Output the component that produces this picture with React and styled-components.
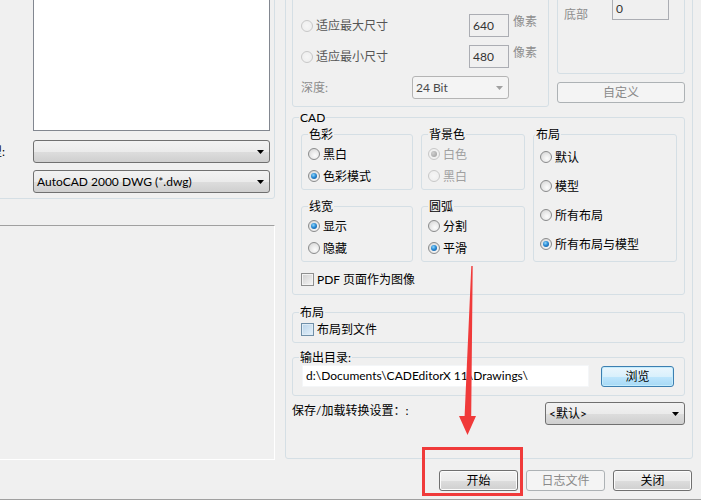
import React from 'react';
import styled, { createGlobalStyle } from 'styled-components';

const FONT = `Lato, "Noto Sans CJK SC", sans-serif`;

const GlobalStyle = createGlobalStyle`
  html, body { margin: 0; padding: 0; background: #f0f0f0; }
  body { font-family: ${FONT}; font-size: 12px; color: #000; }
  * { box-sizing: border-box; }
`;

const Window = styled.div`
  position: relative;
  width: 701px;
  height: 500px;
  overflow: hidden;
  background: #f0f0f0;
  border-bottom: 1px solid #a0a0a0;
  display: flex;
  flex-direction: column;
  font-family: ${FONT};
  font-size: 12px;
  line-height: 15px;
`;

const Main = styled.div`
  display: flex;
  align-items: flex-start;
  gap: 10px;
  height: 460px;
  flex: none;
`;

/* ---------- left side ---------- */
const LeftPane = styled.div`
  width: 285px;
  margin-left: -10px;
  display: flex;
  flex-direction: column;
  flex: none;
`;

const LeftGroup = styled.div`
  margin-top: -50px;
  height: 249px;
  border: 1px solid #d5dfe5;
  border-radius: 3px;
  display: flex;
  flex-direction: column;
  justify-content: flex-end;
  padding-bottom: 5px;
`;

const Listbox = styled.div`
  flex: 1;
  width: 237px;
  margin: 0 0 9px 42px;
  background: #fff;
  border: 1px solid #828790;
`;

const FieldRow = styled.div`
  display: flex;
  align-items: center;
  height: 23px;
  margin-top: ${p => p.$gap || 0}px;
`;

const FieldLabel = styled.div`
  width: 42px;
  flex: none;
  overflow: hidden;
  display: flex;
  justify-content: flex-end;
  padding-right: 28px;
  white-space: nowrap;
`;

const SunkenPanel = styled.div`
  margin-top: 26px;
  height: 235px;
  border-top: 1px solid #a0a0a0;
  border-left: 1px solid #a0a0a0;
  border-right: 1px solid #ffffff;
  border-bottom: 1px solid #ffffff;
`;

/* ---------- controls ---------- */
const ComboBox = styled.div`
  width: ${p => p.$w}px;
  height: 23px;
  flex: none;
  display: flex;
  align-items: center;
  justify-content: space-between;
  padding: 0 5px 0 3px;
  border-radius: 3px;
  border: 1px solid ${p => (p.$disabled ? '#b4b4b4' : '#707070')};
  background: ${p =>
    p.$disabled
      ? '#f4f4f4'
      : 'linear-gradient(to bottom, #f2f2f2 0%, #ebebeb 50%, #dddddd 51%, #cfcfcf 100%)'};
  color: ${p => (p.$disabled ? '#4a4a4a' : '#000')};
  white-space: nowrap;
`;

const Arrow = ({ disabled }) => (
  <svg width="7" height="4" viewBox="0 0 7 4" style={{ flex: 'none', marginTop: 1 }}>
    <polygon points="0,0 7,0 3.5,4" fill={disabled ? '#a0a0a0' : '#000'} />
  </svg>
);

const Combo = ({ w, disabled, children }) => (
  <ComboBox $w={w} $disabled={disabled}>
    <span>{children}</span>
    <Arrow disabled={disabled} />
  </ComboBox>
);

const NumBox = styled.div`
  width: ${p => p.$w}px;
  height: 23px;
  flex: none;
  border: 1px solid #abadb3;
  background: #f0f0f0;
  color: #333;
  padding-left: 3px;
  line-height: 21px;
`;

const PushButton = styled.div`
  width: ${p => p.$w}px;
  height: 21px;
  flex: none;
  display: flex;
  align-items: center;
  justify-content: center;
  border-radius: 3px;
  border: 1px solid ${p => (p.$disabled ? '#adb2b5' : p.$hot ? '#3c7fb1' : '#707070')};
  background: ${p =>
    p.$disabled
      ? '#f4f4f4'
      : p.$hot
      ? 'linear-gradient(to bottom, #eaf6fd 0%, #d9f0fc 50%, #bee6fd 51%, #a7d9f5 100%)'
      : 'linear-gradient(to bottom, #f2f2f2 0%, #ebebeb 50%, #dddddd 51%, #cfcfcf 100%)'};
  box-shadow: ${p => (p.$hot ? 'inset 0 0 0 1px #c5ecfc' : p.$disabled ? 'none' : 'inset 0 0 0 1px #fcfcfc')};
  color: ${p => (p.$disabled ? '#8a8a8a' : '#000')};
`;

const RadioRow = styled.div`
  display: flex;
  align-items: center;
  gap: 3px;
  height: 16px;
  white-space: nowrap;
  color: ${p => p.$color || '#000'};
  width: ${p => (p.$w ? `${p.$w}px` : 'auto')};
  flex: none;
`;

const RadioCircle = styled.span`
  flex: none;
  width: 12px;
  height: 12px;
  border-radius: 50%;
  border: 1px solid ${p => (p.$disabled ? '#c8c8c8' : '#8a8b8c')};
  background: ${p =>
    p.$disabled
      ? 'radial-gradient(circle at 50% 50%, #f6f6f6 0%, #ececec 100%)'
      : 'radial-gradient(circle at 60% 65%, #fcfcfc 0%, #eaeaea 45%, #cfcfcf 100%)'};
  display: flex;
  align-items: center;
  justify-content: center;
  &::after {
    content: '';
    display: ${p => (p.$checked ? 'block' : 'none')};
    width: 6px;
    height: 6px;
    border-radius: 50%;
    background: ${p =>
      p.$disabled
        ? 'radial-gradient(circle at 35% 35%, #d0d0d0 0%, #9a9a9a 100%)'
        : 'radial-gradient(circle at 40% 35%, #8fd6fb 0%, #2a8ad4 45%, #0d4e91 100%)'};
  }
`;

const Radio = ({ checked, disabled, color, w, children }) => (
  <RadioRow $color={color} $w={w}>
    <RadioCircle $checked={checked} $disabled={disabled} />
    <span>{children}</span>
  </RadioRow>
);

const CheckRow = styled.div`
  display: flex;
  align-items: center;
  gap: 3px;
  height: 16px;
  margin-top: ${p => p.$gap || 0}px;
  white-space: nowrap;
`;

const CheckSquare = styled.span`
  flex: none;
  width: 13px;
  height: 13px;
  border: 1px solid ${p => (p.$hot ? '#6f8fa8' : '#8e8f8f')};
  background: ${p =>
    p.$hot
      ? 'linear-gradient(135deg, #b9d3e8 0%, #e4f1fb 100%)'
      : 'linear-gradient(135deg, #cfcfcf 0%, #f6f6f6 100%)'};
  box-shadow: inset 0 0 0 1px ${p => (p.$hot ? '#dfecf6' : '#f3f3f3')};
`;

const Check = ({ hot, children, gap }) => (
  <CheckRow $gap={gap}>
    <CheckSquare $hot={hot} />
    <span>{children}</span>
  </CheckRow>
);

/* ---------- group boxes ---------- */
const GroupBox = styled.fieldset`
  margin: ${p => p.$mt || 0}px 0 0 0;
  padding: 0;
  min-width: 0;
  border: 1px solid #d5dfe5;
  border-radius: 3px;
  grid-row: ${p => p.$span || 'auto'};
`;

const Legend = styled.legend`
  padding: 0 1px;
  margin-left: ${p => (p.$indent !== undefined ? p.$indent : 6)}px;
  line-height: 15px;
  font-size: 12px;
  color: #000;
`;

const PlainBox = styled.div`
  border: 1px solid #d5dfe5;
  border-radius: 3px;
  height: ${p => p.$h}px;
  width: ${p => (p.$w ? `${p.$w}px` : 'auto')};
  flex: none;
  display: flex;
  flex-direction: column;
`;

/* ---------- right side ---------- */
const RightGroup = styled.div`
  width: 408px;
  margin-top: -31px;
  height: 490px;
  flex: none;
  border: 1px solid #d5dfe5;
  border-radius: 3px;
  padding: 10px 7px 0 6px;
  display: flex;
  flex-direction: column;
`;

const TopRow = styled.div`
  display: flex;
  gap: 8px;
  align-items: flex-start;
`;

const ImageGroupBody = styled(PlainBox)`
  justify-content: flex-end;
  gap: 8px;
  padding: 0 0 7px 8px;
`;

const SizeRow = styled.div`
  display: flex;
  align-items: center;
  height: 23px;
`;

const Unit = styled.span`
  align-self: flex-start;
  margin-left: 4px;
  color: #8d8d8d;
`;

const DimLabel = styled.span`
  width: 111px;
  flex: none;
  color: #8d8d8d;
`;

const RightCol = styled.div`
  width: 128px;
  flex: none;
  display: flex;
  flex-direction: column;
  gap: 8px;
`;

const MarginBody = styled(PlainBox)`
  padding: 16px 0 0 6px;
`;

const MarginRow = styled.div`
  display: flex;
  align-items: flex-start;
`;

const MarginLabel = styled.span`
  width: 48px;
  flex: none;
  margin-top: 10px;
  color: #8d8d8d;
`;

const CadBody = styled.div`
  padding: 2px 7px 7px 8px;
  display: flex;
  flex-direction: column;
`;

const CadGrid = styled.div`
  display: grid;
  grid-template-columns: 112px 104px 144px;
  column-gap: 8px;
  row-gap: 9px;
`;

const OptionList = styled.div`
  display: flex;
  flex-direction: column;
  gap: ${p => p.$gap}px;
  padding: ${p => p.$pad};
`;

const PathRow = styled.div`
  display: flex;
  align-items: center;
  gap: 12px;
  padding: 0 10px 8px 9px;
`;

const PathInput = styled.div`
  width: 287px;
  height: 22px;
  flex: none;
  background: #fff;
  border: 1px solid #f4f6f8;
  padding-left: 3px;
  line-height: 20px;
  white-space: nowrap;
  overflow: hidden;
`;

const SettingsRow = styled.div`
  display: flex;
  justify-content: space-between;
  align-items: flex-start;
  margin-top: 6px;
`;

const SettingsLabel = styled.span`
  margin-top: 1px;
  white-space: nowrap;
`;

const Footer = styled.div`
  display: flex;
  justify-content: flex-end;
  gap: 8px;
  padding: 10px 9px 0 0;
`;

const Overlay = styled.svg`
  position: absolute;
  left: 0;
  top: 0;
  width: 701px;
  height: 500px;
  pointer-events: none;
`;

export default function App() {
  return (
    <>
      <GlobalStyle />
      <Window>
        <Main>
          <LeftPane>
            <LeftGroup>
              <Listbox />
              <FieldRow>
                <FieldLabel>类型:</FieldLabel>
                <Combo w={237} />
              </FieldRow>
              <FieldRow $gap={7}>
                <FieldLabel />
                <Combo w={237}>AutoCAD 2000 DWG (*.dwg)</Combo>
              </FieldRow>
            </LeftGroup>
            <SunkenPanel />
          </LeftPane>

          <RightGroup>
            <TopRow>
              <ImageGroupBody $w={257} $h={127}>
                <SizeRow>
                  <Radio disabled color="#555" w={168}>适应最大尺寸</Radio>
                  <NumBox $w={40}>640</NumBox>
                  <Unit>像素</Unit>
                </SizeRow>
                <SizeRow>
                  <Radio disabled color="#555" w={168}>适应最小尺寸</Radio>
                  <NumBox $w={40}>480</NumBox>
                  <Unit>像素</Unit>
                </SizeRow>
                <SizeRow>
                  <DimLabel>深度:</DimLabel>
                  <Combo w={97} disabled>24 Bit</Combo>
                </SizeRow>
              </ImageGroupBody>
              <RightCol>
                <MarginBody $h={94}>
                  <MarginRow>
                    <MarginLabel>底部</MarginLabel>
                    <NumBox $w={57}>0</NumBox>
                  </MarginRow>
                </MarginBody>
                <PushButton $w={128} $disabled>自定义</PushButton>
              </RightCol>
            </TopRow>

            <GroupBox $mt={3}>
              <Legend $indent={6}>CAD</Legend>
              <CadBody>
                <CadGrid>
                  <GroupBox>
                    <Legend>色彩</Legend>
                    <OptionList $gap={6} $pad="4px 0 5px 6px">
                      <Radio>黑白</Radio>
                      <Radio checked>色彩模式</Radio>
                    </OptionList>
                  </GroupBox>
                  <GroupBox>
                    <Legend>背景色</Legend>
                    <OptionList $gap={6} $pad="4px 0 5px 6px">
                      <Radio checked disabled color="#a0a0a0">白色</Radio>
                      <Radio disabled color="#a0a0a0">黑白</Radio>
                    </OptionList>
                  </GroupBox>
                  <GroupBox $span="span 2">
                    <Legend $indent={1}>布局</Legend>
                    <OptionList $gap={13} $pad="7px 0 0 6px">
                      <Radio>默认</Radio>
                      <Radio>模型</Radio>
                      <Radio>所有布局</Radio>
                      <Radio checked>所有布局与模型</Radio>
                    </OptionList>
                  </GroupBox>
                  <GroupBox>
                    <Legend>线宽</Legend>
                    <OptionList $gap={6} $pad="4px 0 5px 6px">
                      <Radio checked>显示</Radio>
                      <Radio>隐藏</Radio>
                    </OptionList>
                  </GroupBox>
                  <GroupBox>
                    <Legend>圆弧</Legend>
                    <OptionList $gap={6} $pad="4px 0 5px 6px">
                      <Radio>分割</Radio>
                      <Radio checked>平滑</Radio>
                    </OptionList>
                  </GroupBox>
                </CadGrid>
                <Check gap={9}>PDF 页面作为图像</Check>
              </CadBody>
            </GroupBox>

            <GroupBox $mt={10}>
              <Legend $indent={6}>布局</Legend>
              <OptionList $gap={0} $pad="1px 0 5px 8px">
                <Check hot>布局到文件</Check>
              </OptionList>
            </GroupBox>

            <GroupBox $mt={7}>
              <Legend $indent={6}>输出目录:</Legend>
              <PathRow>
                <PathInput>d:\Documents\CADEditorX 11\Drawings\</PathInput>
                <PushButton $w={73} $hot>浏览</PushButton>
              </PathRow>
            </GroupBox>

            <SettingsRow>
              <SettingsLabel>保存/加载转换设置：:</SettingsLabel>
              <Combo w={140}>&lt;默认&gt;</Combo>
            </SettingsRow>
          </RightGroup>
        </Main>

        <Footer>
          <PushButton $w={79}>开始</PushButton>
          <PushButton $w={79} $disabled>日志文件</PushButton>
          <PushButton $w={79}>关闭</PushButton>
        </Footer>

        <Overlay viewBox="0 0 701 500">
          <polygon
            points="471.3,266 472.7,266 471.2,416 476,416 467.5,435 459,416 464.6,416"
            fill="#f03a3a"
          />
          <rect x="423.5" y="448.5" width="98" height="46" fill="none" stroke="#f03a3a" strokeWidth="3" />
        </Overlay>
      </Window>
    </>
  );
}
